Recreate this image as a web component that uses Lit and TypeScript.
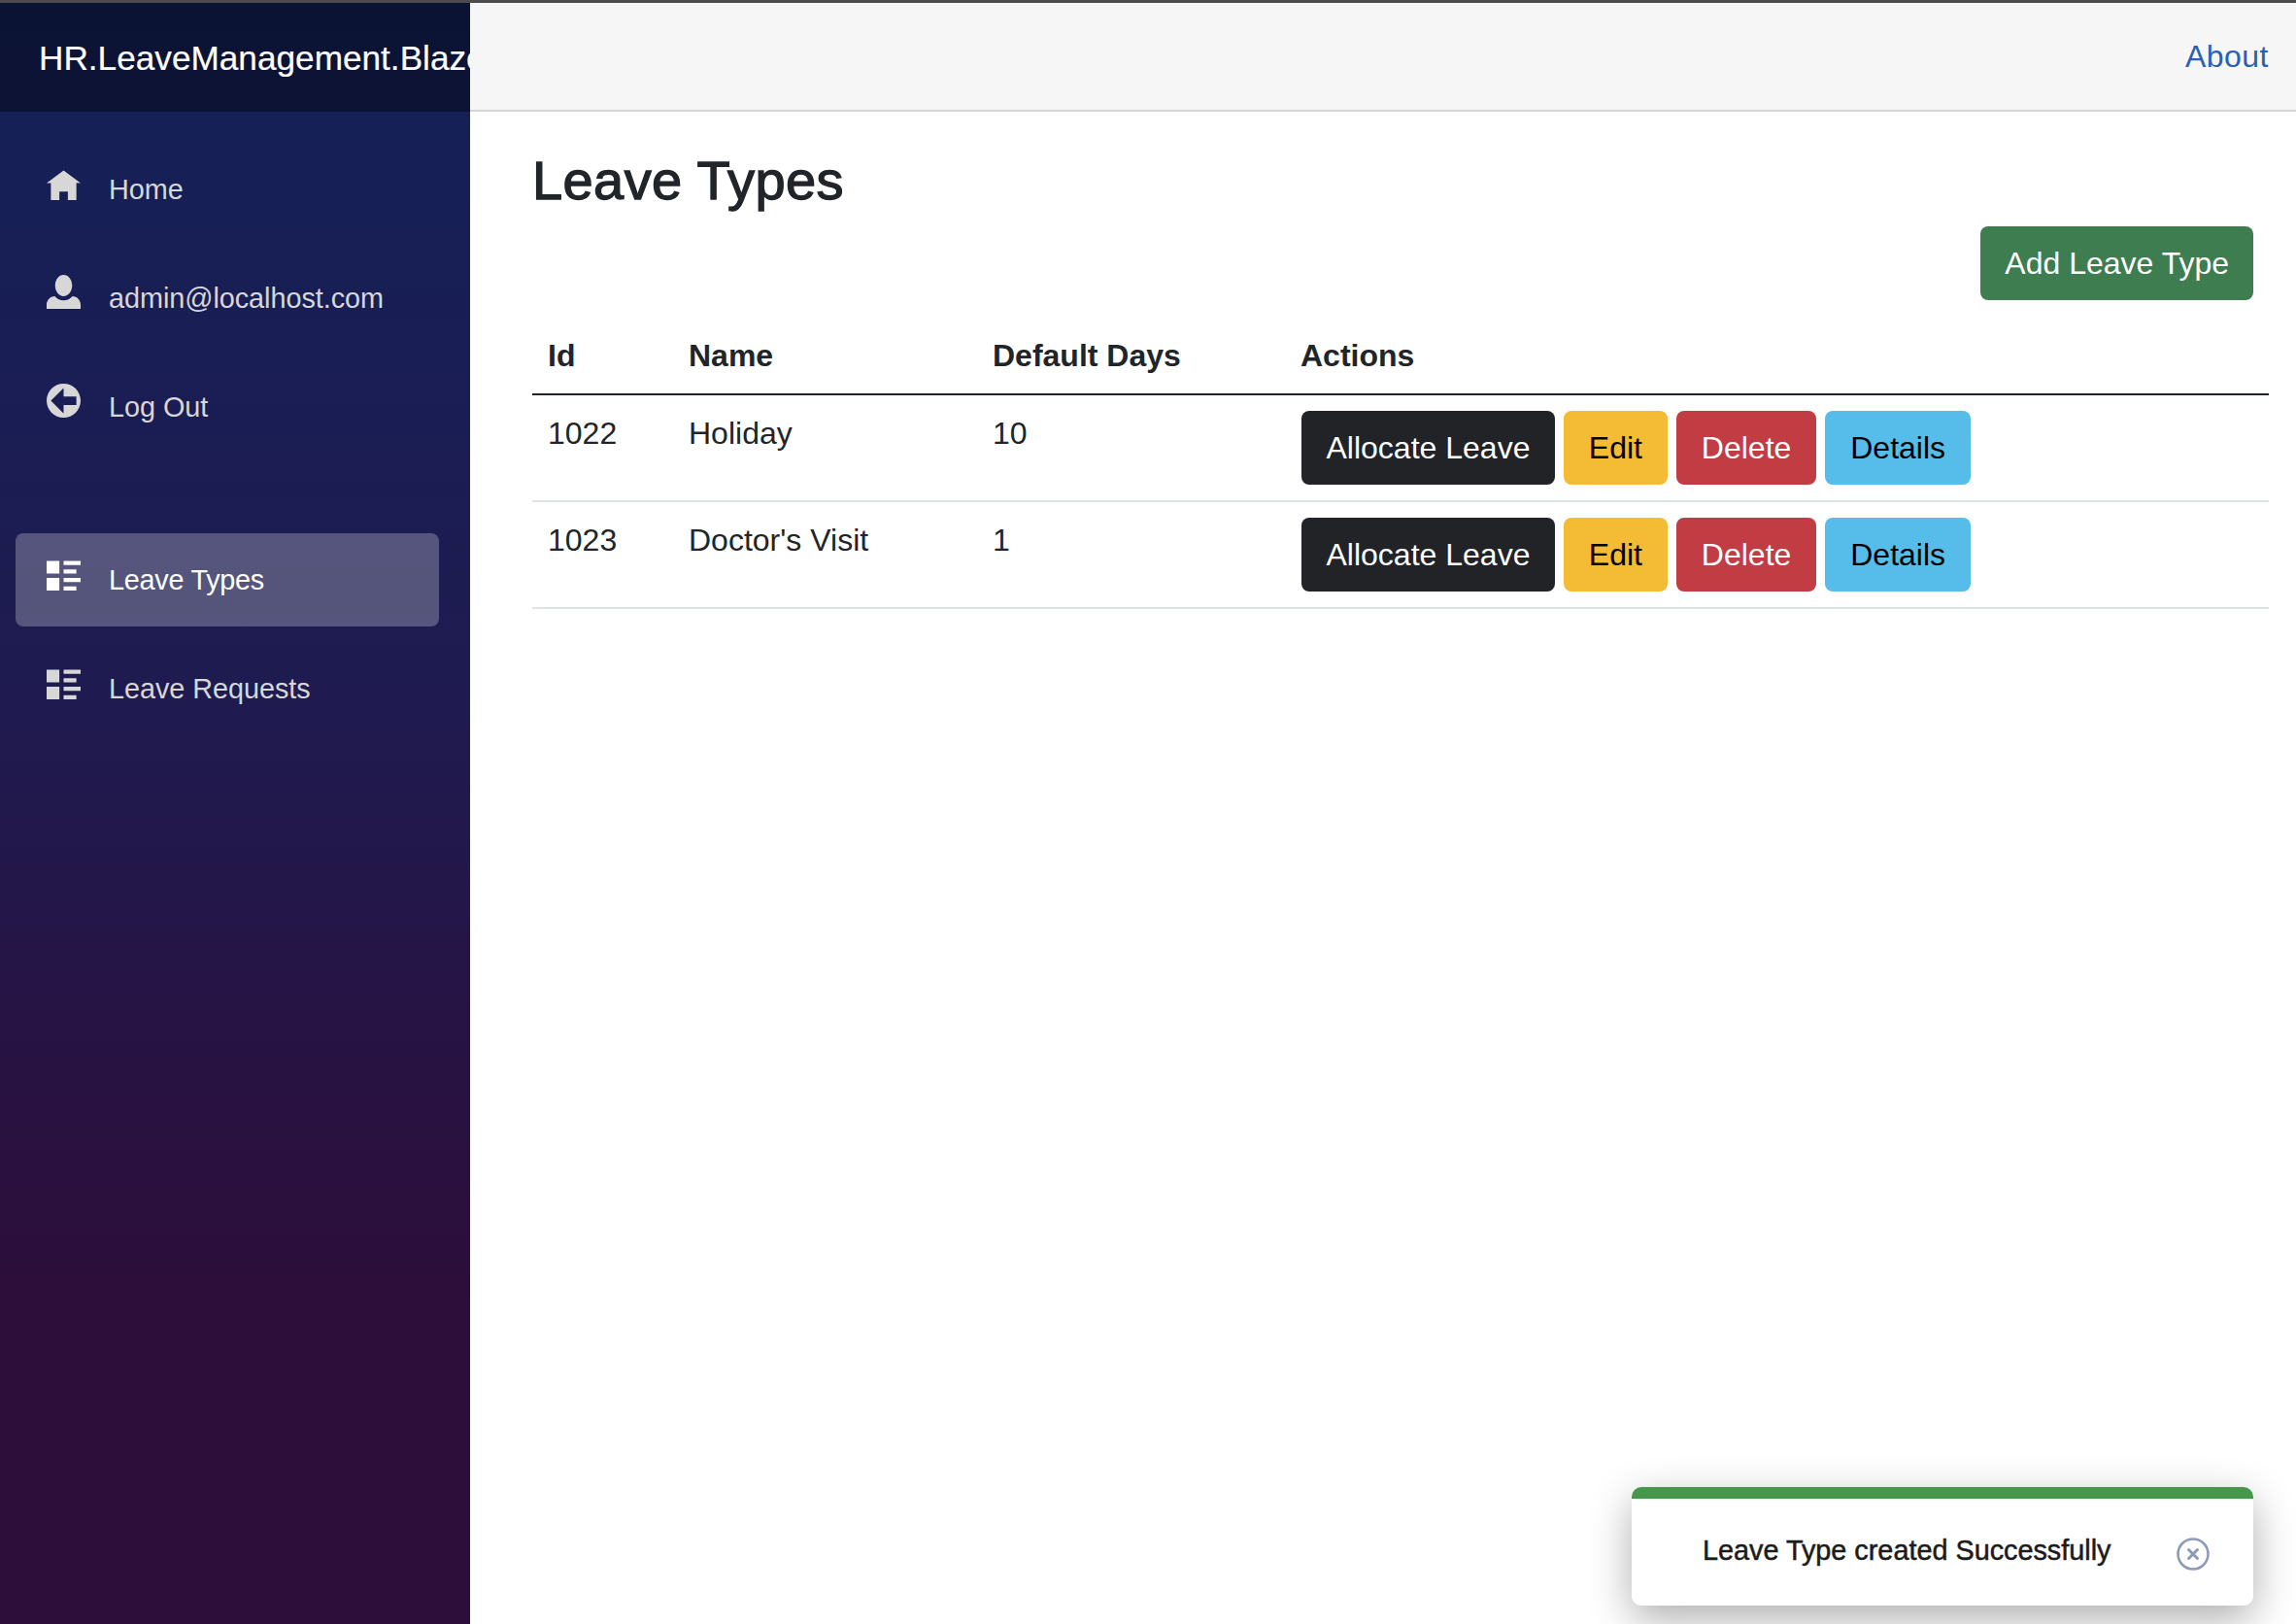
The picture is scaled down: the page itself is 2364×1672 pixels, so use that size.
import { LitElement, html, css, svg } from 'lit';
import { customElement } from 'lit/decorators.js';

interface NavEntry {
  label: string;
  icon: ReturnType<typeof svg>;
  active?: boolean;
}

interface LeaveType {
  id: number;
  name: string;
  days: number;
}

// Open Iconic glyphs, 8x8 box
const homeIcon = svg`<path transform="translate(0 1)" d="M4 0l-4 3h1v4h2v-2h2v2h2v-4.03l1 .03-4-3z" />`;
const personIcon = svg`<path d="M4 0c-1.1 0-2 1.12-2 2.5s.9 2.5 2 2.5 2-1.12 2-2.5-.9-2.5-2-2.5zm-2.09 5c-1.06.05-1.91.92-1.91 2v1h8v-1c0-1.08-.84-1.95-1.91-2-.54.61-1.28 1-2.09 1-.81 0-1.55-.39-2.09-1z" />`;
const arrowIcon = svg`<path d="M4 0c-2.21 0-4 1.79-4 4s1.79 4 4 4 4-1.79 4-4-1.79-4-4-4zm0 1v2h3v2h-3v2l-3-3 3-3z" />`;
const listIcon = svg`<path transform="translate(0 1)" d="M0 0v3h3v-3h-3zm4 0v1h4v-1h-4zm0 2v1h3v-1h-3zm-4 2v3h3v-3h-3zm4 0v1h4v-1h-4zm0 2v1h3v-1h-3z" />`;

const accountNav: NavEntry[] = [
  { label: 'Home', icon: homeIcon },
  { label: 'admin@localhost.com', icon: personIcon },
  { label: 'Log Out', icon: arrowIcon },
];

const leaveNav: NavEntry[] = [
  { label: 'Leave Types', icon: listIcon, active: true },
  { label: 'Leave Requests', icon: listIcon },
];

const leaveTypes: LeaveType[] = [
  { id: 1022, name: 'Holiday', days: 10 },
  { id: 1023, name: "Doctor's Visit", days: 1 },
];

@customElement('app-root')
export class AppRoot extends LitElement {
  static styles = css`
    :host {
      display: block;
      height: 100vh;
      overflow: hidden;
      position: relative;
      background: #fff;
      color: #212529;
      font-family: 'Liberation Sans', Arial, sans-serif;
      font-size: 32px;
      line-height: 48px;
    }

    .strip {
      height: 3px;
      background: #4c4c4e;
    }

    .shell {
      display: flex;
      height: calc(100vh - 3px);
    }

    .sidebar {
      flex: 0 0 484px;
      overflow: hidden;
      background: linear-gradient(180deg, #132158 0%, #1f1b50 43%, #2d0d3a 80%);
    }

    .brand {
      height: 110px;
      padding: 2px 0 0 40px;
      display: flex;
      align-items: center;
      white-space: nowrap;
      overflow: hidden;
      color: #fff;
      font-size: 35.2px;
      -webkit-text-stroke: 0.2px currentColor;
      background: rgba(0, 0, 0, 0.4);
    }

    nav {
      padding-top: 32px;
    }

    .group + .group {
      margin-top: 82px;
    }

    .item {
      display: flex;
      align-items: center;
      height: 96px;
      margin: 0 32px 16px 16px;
      padding-left: 32px;
      border-radius: 8px;
      color: #d7d7d7;
      font-size: 28.8px;
      letter-spacing: -0.04px;
    }

    .item.active {
      background: rgba(255, 255, 255, 0.25);
      color: #fff;
      letter-spacing: -0.25px;
    }

    .item svg {
      flex: 0 0 35px;
      width: 35px;
      height: 35px;
      margin: -13px 29px 0 0;
      fill: currentColor;
    }

    .main {
      flex: 1;
      min-width: 0;
    }

    .top-row {
      height: 110px;
      display: flex;
      align-items: center;
      justify-content: flex-end;
      padding-right: 28px;
      background: #f6f6f6;
      border-bottom: 2px solid #d6d5d5;
    }

    .top-row a {
      color: #2a5fb4;
      text-decoration: none;
      letter-spacing: 0.5px;
    }

    .content {
      padding: 37px 28px 0 64px;
    }

    h1 {
      margin: 0 0 14px;
      font-size: 56px;
      line-height: 67px;
      font-weight: 400;
      letter-spacing: 0.4px;
      -webkit-text-stroke: 1.3px currentColor;
    }

    .add-row {
      display: flex;
      justify-content: flex-end;
      padding-right: 16px;
      margin-bottom: 16px;
    }

    .btn {
      display: inline-block;
      padding: 12px 24px;
      border: 2px solid transparent;
      border-radius: 8px;
      font: inherit;
      white-space: nowrap;
    }

    .add-row .btn {
      padding: 12px 23px;
    }

    .success { background: #3e7d4f; color: #fff; }
    .dark { background: #212327; color: #fff; padding: 12px 23.5px; }
    .warning { background: #f4bb35; color: #000; }
    .danger { background: #c23c44; color: #fff; }
    .info { background: #56bdea; color: #000; }

    table {
      width: 100%;
      table-layout: fixed;
      border-collapse: collapse;
    }

    .col-id { width: 145px; }
    .col-name { width: 313px; }
    .col-days { width: 318px; }

    th, td {
      padding: 16px;
      text-align: left;
      vertical-align: top;
    }

    th {
      padding: 17px 16px 15px;
      font-weight: 700;
      border-bottom: 2px solid #212529;
    }

    th.actions {
      padding-left: 15px;
    }

    td {
      border-bottom: 2px solid #dee2e6;
    }

    td.text {
      padding-top: 15px;
    }

    .toast-shadow {
      position: absolute;
      right: 44px;
      bottom: 19px;
      width: 640px;
      height: 122px;
      border-radius: 10px;
      box-shadow: 0 14px 44px rgba(0, 0, 0, 0.32);
    }

    .toast {
      position: absolute;
      right: 44px;
      bottom: 19px;
      width: 640px;
      height: 122px;
      box-sizing: border-box;
      display: flex;
      align-items: center;
      padding: 12px 44px 0 73px;
      border-radius: 10px;
      overflow: hidden;
      background: #fff;
      color: #1b1b1b;
      font-size: 28.8px;
      -webkit-text-stroke: 0.5px currentColor;
    }

    .toast-bar {
      position: absolute;
      left: 0;
      right: 0;
      top: 0;
      height: 12px;
      background: #47974b;
    }

    .toast span {
      flex: 1;
      margin-top: -4px;
    }

    .toast svg {
      width: 36px;
      height: 36px;
      margin-top: 3px;
      stroke: #8c9cb8;
      fill: none;
    }
  `;

  private renderNavItem(entry: NavEntry) {
    return html`
      <div class="item ${entry.active ? 'active' : ''}">
        <svg viewBox="0 0 8 8">${entry.icon}</svg>
        ${entry.label}
      </div>
    `;
  }

  private renderRow(row: LeaveType) {
    return html`
      <tr>
        <td class="text">${row.id}</td>
        <td class="text">${row.name}</td>
        <td class="text">${row.days}</td>
        <td>
          <span class="btn dark">Allocate Leave</span>
          <span class="btn warning">Edit</span>
          <span class="btn danger">Delete</span>
          <span class="btn info">Details</span>
        </td>
      </tr>
    `;
  }

  render() {
    return html`
      <div class="strip"></div>
      <div class="shell">
        <aside class="sidebar">
          <div class="brand">HR.LeaveManagement.BlazorUI</div>
          <nav>
            <div class="group">${accountNav.map((e) => this.renderNavItem(e))}</div>
            <div class="group">${leaveNav.map((e) => this.renderNavItem(e))}</div>
          </nav>
        </aside>
        <div class="main">
          <div class="top-row"><a href="#">About</a></div>
          <div class="content">
            <h1>Leave Types</h1>
            <div class="add-row"><span class="btn success">Add Leave Type</span></div>
            <table>
              <colgroup>
                <col class="col-id" />
                <col class="col-name" />
                <col class="col-days" />
                <col />
              </colgroup>
              <thead>
                <tr>
                  <th>Id</th>
                  <th>Name</th>
                  <th>Default Days</th>
                  <th class="actions">Actions</th>
                </tr>
              </thead>
              <tbody>${leaveTypes.map((r) => this.renderRow(r))}</tbody>
            </table>
          </div>
        </div>
      </div>
      <div class="toast-shadow"></div>
      <div class="toast">
        <div class="toast-bar"></div>
        <span>Leave Type created Successfully</span>
        <svg viewBox="0 0 36 36">
          <circle cx="18" cy="18" r="15.5" stroke-width="2.6" />
          <path d="M13.5 13.5l9 9m0-9l-9 9" stroke-width="3" stroke-linecap="round" />
        </svg>
      </div>
    `;
  }
}

declare global {
  interface HTMLElementTagNameMap {
    'app-root': AppRoot;
  }
}
